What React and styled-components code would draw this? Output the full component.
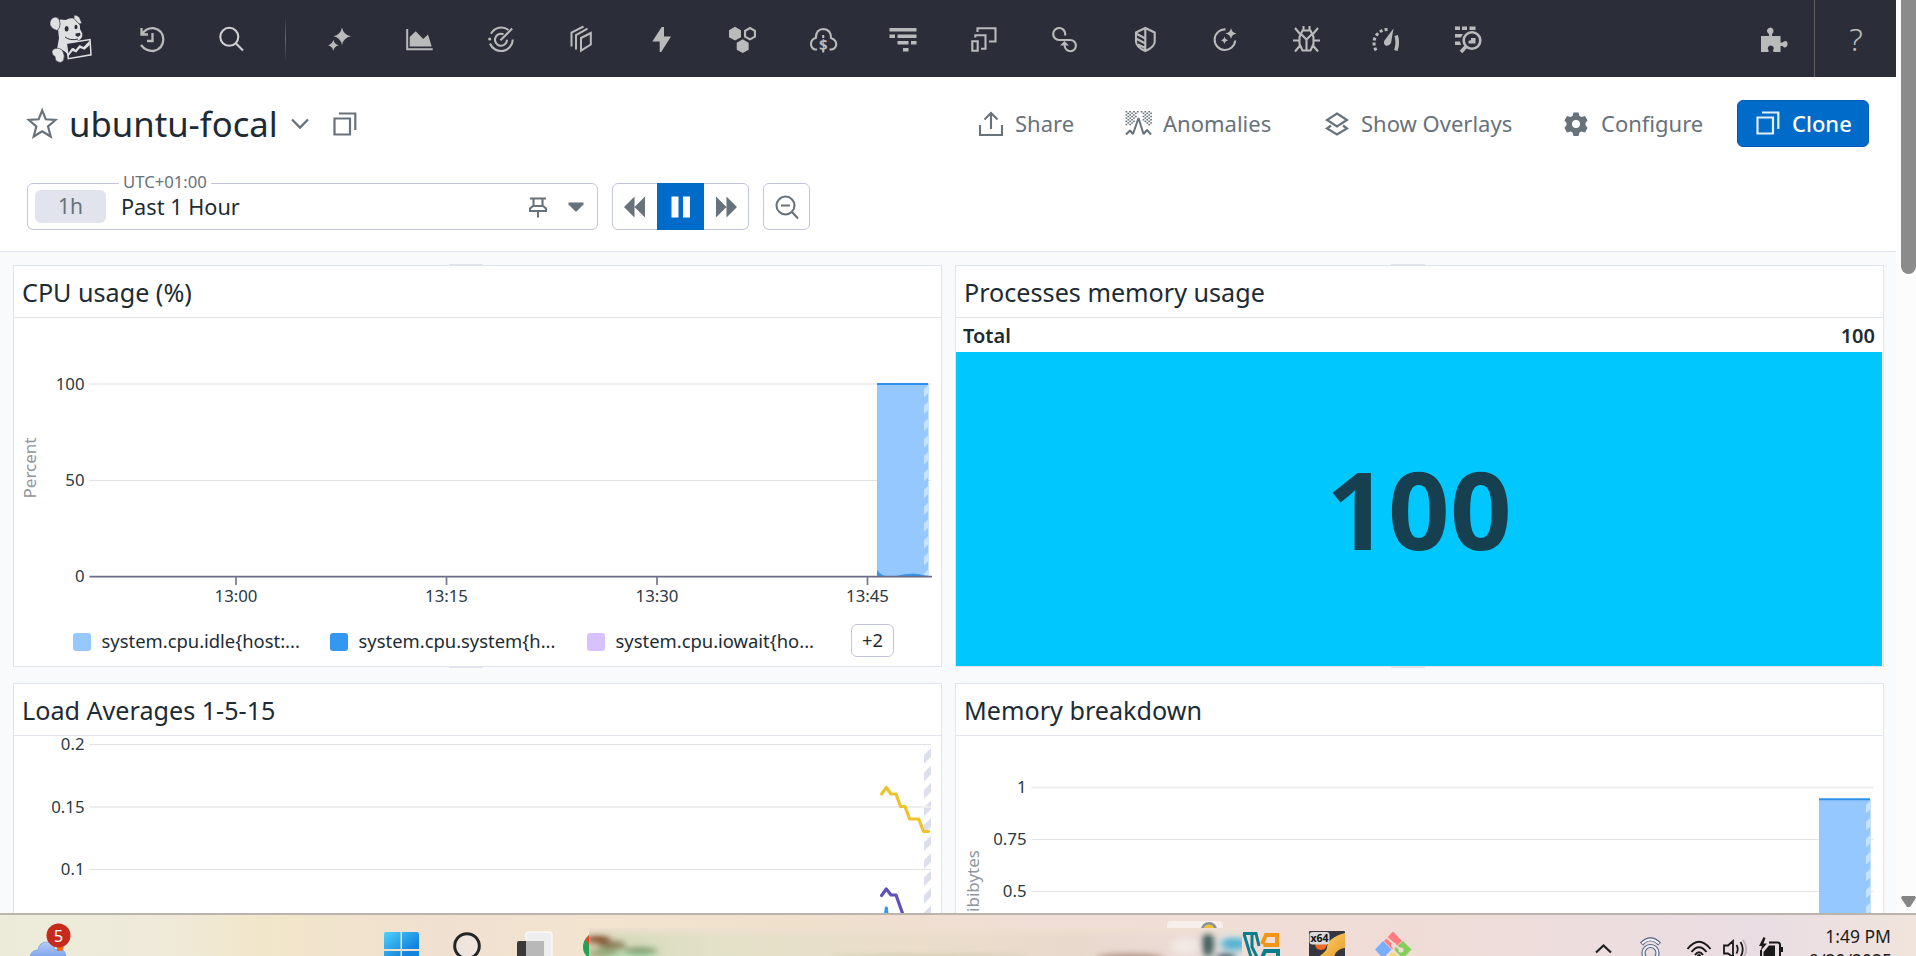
import React from "react";
import styled, { createGlobalStyle, css } from "styled-components";

const GlobalStyle = createGlobalStyle`
  * { box-sizing: border-box; }
  body { margin: 0; overflow: hidden; font-family: "Noto Sans", "Open Sans", sans-serif; color: #1c2b34; }
  svg { display: block; flex: none; overflow: visible; }
  svg text { font-family: "Noto Sans", "Open Sans", sans-serif; }
`;

const Screen = styled.div`
  width: 1916px;
  height: 956px;
  display: flex;
  flex-direction: column;
  overflow: hidden;
`;
const Browser = styled.div`
  height: 913px;
  flex: none;
  display: flex;
  overflow: hidden;
`;
const Page = styled.main`
  width: 1896px;
  height: 913px;
  background: #f9fafc;
  overflow: hidden;
`;
const ScrollTrack = styled.div`
  width: 20px;
  background: #fcfcfc;
  display: flex;
  flex-direction: column;
  justify-content: space-between;
  align-items: flex-end;
  padding-bottom: 5px;
`;
const ScrollThumb = styled.div`
  width: 15px;
  height: 274px;
  background: #8b8b8b;
  border-radius: 0 0 8px 8px;
`;

/* ---------- navigation ---------- */
const Nav = styled.nav`
  height: 77px;
  background: #2b2e39;
  display: flex;
  align-items: center;
  color: #b9bbba;
`;
const Logo = styled.div`
  width: 44px;
  margin-left: 49px;
`;
const NavItem = styled.div`
  width: ${(p) => p.$w || 80.5}px;
  margin-left: ${(p) => p.$ml || 0}px;
  padding-top: 1px;
  display: flex;
  justify-content: center;
  color: ${(p) => p.$color || "inherit"};
`;
const NavDivider = styled.div`
  width: 1px;
  height: 46px;
  margin: 0 13.5px 0 13px;
  background: linear-gradient(#2b2e39, #6a6a6c 50%, #2b2e39);
`;
const HelpSlot = styled.div`
  height: 77px;
  width: 82px;
  margin-left: 24px;
  border-left: 1px solid #625f64;
  display: flex;
  align-items: center;
  justify-content: center;
`;
const Spacer = styled.div`
  flex: ${(p) => (p.$w ? `0 0 ${p.$w}px` : "1")};
`;

/* ---------- header ---------- */
const Header = styled.header`
  height: 175px;
  background: #fff;
  border-bottom: 1px solid #e1e4ea;
  padding: 23px 27px 0 26px;
`;
const TitleRow = styled.div`
  display: flex;
  align-items: center;
  height: 47px;
  color: #67727a;
`;
const Title = styled.h1`
  margin: 0 11px 0 11px;
  width: 210px;
  font-weight: 400;
  font-size: 34.7px;
  line-height: 47px;
  color: #1c2b34;
  white-space: nowrap;
`;
const Action = styled.div`
  display: flex;
  align-items: center;
  gap: ${(p) => p.$gap || 11}px;
  width: ${(p) => p.$w}px;
  font-size: 22px;
  line-height: 47px;
  white-space: nowrap;
`;
const CloneButton = styled.button`
  width: 132px;
  height: 47px;
  border: 1px solid #0858b8;
  border-radius: 6px;
  background: #006bc8;
  color: #fff;
  font: 500 22px/43px "Noto Sans", sans-serif;
  display: flex;
  align-items: center;
  gap: 12px;
  padding: 0 0 1px 18px;
`;
const TimeRow = styled.div`
  display: flex;
  margin-top: 36px;
  padding-left: 1px;
  height: 47px;
  color: #67727a;
`;
const frame = css`
  border: 1px solid #c2c5dc;
  border-radius: 6px;
`;
const TimePicker = styled.div`
  ${frame}
  width: 571px;
  position: relative;
  display: flex;
  align-items: center;
  padding: 0 13px 0 7px;
`;
const RangeChip = styled.span`
  width: 71px;
  height: 33px;
  border-radius: 6px;
  background: #e1e3ed;
  font-size: 21px;
  line-height: 33px;
  text-align: center;
`;
const RangeText = styled.span`
  margin-left: 15px;
  flex: 1;
  font-size: 21.7px;
  line-height: 44px;
  color: #1c2b34;
`;
const ZoneLabel = styled.span`
  position: absolute;
  left: 91px;
  top: -13px;
  padding: 0 4px;
  background: #fff;
  font-size: 16.7px;
  line-height: 22px;
`;
const Transport = styled.div`
  ${frame}
  width: 137px;
  margin-left: 14px;
  display: flex;
`;
const TransportButton = styled.div`
  width: ${(p) => (p.$active ? 47 : 44)}px;
  height: 47px;
  margin: -1px 0;
  display: flex;
  align-items: center;
  justify-content: center;
  background: ${(p) => (p.$active ? "#006bc8" : "transparent")};
`;
const ZoomOut = styled.div`
  ${frame}
  width: 47px;
  margin-left: 14px;
  display: flex;
  align-items: center;
  justify-content: center;
`;

/* ---------- widgets ---------- */
const Grid = styled.section`
  display: grid;
  grid-template-columns: 929px 929px;
  grid-template-rows: 402px 402px;
  gap: 16px 13px;
  padding: 13px 0 0 13px;
`;
const Card = styled.article`
  position: relative;
  background: #fff;
  border: 1px solid #e1e3ed;
  &::before, &::after {
    content: "";
    position: absolute;
    left: 435px;
    width: 34px;
    height: 2px;
    background: #e1e3ed;
  }
  &::before { top: -2px; display: ${(p) => (p.$plain ? "none" : "block")}; }
  &::after { bottom: -2px; }
`;
const CardTitle = styled.h2`
  margin: 0;
  height: 52px;
  padding: 2px 0 0 8px;
  border-bottom: 1px solid #e1e3ed;
  font-weight: 400;
  font-size: 25.15px;
  line-height: 49px;
`;
const Legend = styled.div`
  display: flex;
  align-items: center;
  height: 33px;
  margin-top: 7px;
  padding-left: 59px;
`;
const LegendItem = styled.div`
  width: 257px;
  display: flex;
  align-items: center;
  gap: 10.5px;
  font-size: 18.4px;
  white-space: nowrap;
`;
const Swatch = styled.i`
  width: 18px;
  height: 18px;
  margin-top: 2px;
  border-radius: 3px;
  background: ${(p) => p.$color};
`;
const MoreButton = styled.span`
  ${frame}
  margin-left: 7px;
  width: 43px;
  height: 33px;
  font-size: 18.4px;
  line-height: 30px;
  text-align: center;
`;
const TotalRow = styled.div`
  height: 34px;
  padding: 0 8px 0 7px;
  display: flex;
  justify-content: space-between;
  font-weight: 600;
  font-size: 20px;
  line-height: 35px;
`;
const BigValue = styled.div`
  height: 314px;
  margin-right: 1px;
  background: #00c8ff;
  color: #16404f;
  font-weight: 700;
  font-size: 108px;
  line-height: 313px;
  text-align: center;
`;

/* ---------- taskbar ---------- */
const Taskbar = styled.footer`
  height: 43px;
  flex: none;
  border-top: 2px solid #b9b4ae;
  background: linear-gradient(90deg, #ecebd9 0, #efeada 160px, #f2e6ca 260px, #f0e0d0 440px, #f3e4d0 600px, #efe0cc 800px, #f1ded7 1060px, #efdcd6 1400px, #eadde3 1760px, #f0e4dc 1916px);
  display: flex;
  overflow: hidden;
`;
const Clock = styled.div`
  width: 82px;
  padding-top: 9px;
  text-align: right;
  font-size: 17.5px;
  line-height: 24px;
  white-space: nowrap;
  color: #1b1b1b;
`;

/* ---------- icons ---------- */
const Glyph = ({ children, size = 32, h, ...rest }) => (
  <svg width={size} height={h || size} viewBox={`0 0 ${size} ${h || size}`} fill="none" stroke="currentColor" strokeWidth="2.1" {...rest}>
    {children}
  </svg>
);
const solid = { fill: "currentColor", stroke: "none" };
const hex = (x, y, r) =>
  [0, 1, 2, 3, 4, 5].map((i) => {
    const a = (Math.PI / 3) * i - Math.PI / 2;
    return `${(x + r * Math.cos(a)).toFixed(2)},${(y + r * Math.sin(a)).toFixed(2)}`;
  }).join(" ");

const Dog = () => (
  <svg width="44" height="50" viewBox="0 0 44 50">
    <g fill="#dfe0e2">
      <path d="M11 5.5 17 6Q20 3.5 25 4.5L30 9.5Q31.5 12 31 15L33.3 19.5Q33.5 24 31 25.5L26 28 17 29.5 18.5 40Q13 34 8 35.5L10 24 9 15Z" />
      <path d="M1 8Q2.500 3 7 3Q11 4 11 9Q11 15 8 16.500Q3 15.500 1 11Z" stroke="#2b2e39" strokeWidth=".7" />
      <path d="M25 1Q28 .5 30.500 3.500L33 9.500 30 10 25 4.500Z" stroke="#2b2e39" strokeWidth=".7" />
      <path d="M4 35.500Q9 32.500 13.500 36.500 16.500 42 14.500 46.500 12 50 8 47.500 6 46 6 42.500 2.500 40.500 3 37.500Z" stroke="#2b2e39" strokeWidth=".6" />
    </g>
    <ellipse cx="17.600" cy="14.800" rx="2" ry="2.700" fill="#2b2e39" />
    <ellipse cx="27" cy="13" rx="1.500" ry="2.300" fill="#2b2e39" />
    <path d="M26.500 19.500 31 18.800 31.500 21 29 23 26.500 21.500Z" fill="#2b2e39" />
    <path d="M16 23Q21 27 29 25" stroke="#2b2e39" fill="none" />
    <path d="M17.300 29.300 41 25.500 42 40.800 19.300 44.700Z" fill="#2b2e39" stroke="#dfe0e2" strokeWidth="1.500" />
    <path d="M18.500 40.500 22.800 34.200 24.500 34 26.500 35.800 30.500 31 34.500 33 40.800 26.500V31L35.500 35.800 31 34 27.200 38.500 23.500 37 19.300 42.500Z" fill="#dfe0e2" />
  </svg>
);

const navIcons = [
  <g {...solid}><path d="M18 4.500Q19.500 12 27 13.300 19.500 14.700 18 22 16.500 14.700 9.500 13.300 16.500 12 18 4.500Z" /><path d="M9.300 16.800Q10.200 21.200 14.800 22.300 10.200 23.400 9.300 28 8.400 23.400 4 22.300 8.400 21.200 9.300 16.800Z" /></g>,
  <g transform="translate(-.8 0)"><path d="M4 6V26.300H29.500" strokeWidth="2" /><path {...solid} d="M6.500 23.500V14L12.500 8.200 20 16 24.800 11.500 28.500 23.500Z" /></g>,
  <><path d="M6 10.800A11.700 11.700 0 0 1 23.500 7M27.800 16.500A11.800 11.800 0 0 1 5 20.500M18.500 11.300A6 6 0 1 0 22 16.800M15.500 17.200 27.200 5.500" /><circle cx="4.700" cy="16" r="1.600" {...solid} /></>,
  <path d="M16 15 25.800 10V21.500L16 27.600ZM11 26.500V12L22.500 5.700M6.500 23.500V9.500L18.500 3.500" strokeWidth="2" />,
  <path {...solid} d="M15.700 4H18V13.600H25L15.200 29H13.700V18.500H6.300Z" />,
  <><polygon {...solid} points={hex(9, 10.700, 6.900)} /><polygon points={hex(24, 10.700, 5.700)} /><polygon {...solid} points={hex(16.700, 23.200, 6.900)} /></>,
  <><path d="M10 26.500H8Q4 25.500 4 20.500 4.500 16 8.800 15 9 6 16.500 6 24 6.500 24 15 29.300 17 29.300 21.500 28.500 26 24.500 26.500H22.500" /><text x="16.200" y="26.500" textAnchor="middle" fontSize="15" fontWeight="700" {...solid}>$</text><path d="M16.200 12V15M16.200 26V29.500" /></>,
  <path {...solid} d="M2.500 5H29.500V8.500H2.500ZM2.500 11.500H8V15H2.500ZM10.500 11.500H29.500V15H10.500ZM10.500 18H21.500V21.500H10.500ZM24 18H29.500V21.500H24ZM16 25H21.500V28.500H16Z" />,
  <path d="M9.500 9V5.300H27.500V18.500H21M7.300 14.500V12.300H17.500V25.700H13M4.300 18.300H9.700V27.800H4.300Z" />,
  <><path d="M17.200 12.500V10.700A6 6 0 1 0 11 17H22.300A5.600 5.600 0 1 1 16.700 23V21" /><path {...solid} d="M12 22.500 16.500 18 21 22.500Z" /></>,
  <path d="M16.300 5 25.700 9.500V18.500Q25.700 24 16.300 28 7 24 7 18.500V9.500ZM16.300 5V28M7 10.500 16.300 15.500M7 15.500 16.300 20.500M9 21.500 16.300 25" />,
  <><path d="M16.500 6.400A10.300 10.300 0 1 0 26.200 17.500" /><path {...solid} d="M22 5Q22.800 9.700 27.500 10.500 22.800 11.300 22 16 21.200 11.300 16.500 10.500 21.200 9.700 22 5ZM15.500 13.500Q16.200 16.800 19.300 17.200 16.200 17.800 15.500 21 14.800 17.800 12 17.200 14.800 16.800 15.500 13.500Z" /></>,
  <path d="M12.500 7.500H20.500L23.500 14V21L20.500 27.500H12.500L9.500 21V14ZM10.500 10.500 16.500 16.500 22.500 10.500M16.500 16.500V27.500M13.500 7V3M19.500 7V3M10 11 5 5M23 11 28 5M9.500 17.500H3M23.500 17.500H30M10.500 22 5 28.500M22.500 22 28 28.500" />,
  <><path d="M6 27.500Q1.500 18 7 11.500 12 6 18.500 6.500" strokeWidth="3" strokeDasharray="3 2.200" /><path {...solid} d="M23.500 5.500 21 20Q19 23.500 15.500 22.500 13 20.500 14.500 17.500Z" /><path d="M26.200 12.500Q28.500 20 25.800 27.500" strokeWidth="3.600" /></>,
  <><path {...solid} d="M4 3.500H9V7H4ZM11 3.500H16V7H11ZM18.500 3.500H24.500V7H18.500ZM4 11H12L10 14.500H4ZM4 18.500H9L10 22H4Z" /><circle cx="21" cy="17.500" r="8.300" strokeWidth="2.600" /><path d="M15 23.500 10 29" strokeWidth="3.500" /><path {...solid} d="M17.500 20.500V18L20 17V15H24.500V20.500Z" /></>,
];

const Star = () => (
  <Glyph size={32} stroke="#67727a"><path d="M16.200 2.500 19.800 11.300 29.500 12 22 18.500 24.700 28.500 16.200 23.200 7.700 28.500 10.300 18.500 2.800 12 12.600 11.300Z" strokeWidth="2.200" /></Glyph>
);
const CopyIcon = ({ color = "#67727a" }) => (
  <Glyph size={24} stroke={color}><path d="M1.500 6.500H17V22.500H1.500ZM6 1.500H22.300V18" strokeWidth="2.200" /></Glyph>
);
const Dots = () => {
  const dots = [];
  for (let r = 0; r < 9; r++) for (let c = 0; c < 14; c++) {
    const x = 0.5 + c * 1.900, y = 1 + r * 1.600;
    const d = Math.abs(x - 13.500);
    if ((r + c) % 2 === 0 && (r < 1 || (d > 2 + r * 0.350 && (r < 7 || d > 6)))) dots.push(<rect key={`${r}-${c}`} x={x} y={y} width="1.700" height="1.500" />);
  }
  return <g fill="currentColor" stroke="none">{dots}</g>;
};

const ink = "#2b3a43";
const Stripes = ({ id, color, period, x, y, w }) => (
  <pattern id={id} width={w} height={period} x={x} y={y} patternUnits="userSpaceOnUse">
    <path d={`M0 ${w}L${w} 0V${period * 0.500}L0 ${period * 0.500 + w}Z`} fill={color} />
  </pattern>
);
const GridLine = ({ x, y, x2, label, color = "#e0e2e5", w = 1 }) => (
  <>
    <path d={`M${x} ${y}H${x2}`} stroke={color} strokeWidth={w} />
    <text x={x - 5} y={y + 5.700} textAnchor="end" fontSize="16.800" fill={ink}>{label}</text>
  </>
);
const CpuChart = () => (
  <svg width="927" height="299" viewBox="14 318 927 299">
    <defs><Stripes id="cpuStripe" color="#c9e2fd" period={16.800} x={924} y={384} w={5} /></defs>
    <GridLine x={89.500} x2={931} y={384} w={2} color="#eeeeef" label="100" />
    <GridLine x={89.500} x2={931} y={480.500} label="50" />
    <rect x="877" y="384" width="51.500" height="192" fill="#94c8ff" />
    <rect x="924" y="385" width="5" height="190" fill="url(#cpuStripe)" />
    <path d="M877 384H928" stroke="#2f8fec" strokeWidth="2" />
    <path d="M877 570Q881 575 885 576H877ZM896 576Q914 571 926 576Z" fill="#3598f0" />
    <path d="M89.500 576.700H932" stroke="#6c6c86" strokeWidth="1.800" />
    <text x="84.500" y="582" textAnchor="end" fontSize="16.800" fill={ink}>0</text>
    {[[236, "13:00"], [446.500, "13:15"], [657, "13:30"], [867.500, "13:45"]].map(([x, t]) => (
      <g key={t}>
        <path d={`M${x} 577V585`} stroke="#7d7d96" strokeWidth="1.800" />
        <text x={x} y="602" textAnchor="middle" fontSize="16.800" fill={ink}>{t}</text>
      </g>
    ))}
    <text transform="translate(36 468) rotate(-90)" textAnchor="middle" fontSize="17" fill="#8f979c">Percent</text>
  </svg>
);
const LoadChart = () => (
  <svg width="927" height="180" viewBox="14 736 927 180">
    <defs><Stripes id="loadStripe" color="#dcdeeb" period={17.500} x={924} y={748} w={7} /></defs>
    <rect x="924" y="744.500" width="7" height="170" fill="url(#loadStripe)" />
    <GridLine x={89.500} x2={931} y={744.500} label="0.2" />
    <GridLine x={89.500} x2={931} y={807} w={2} color="#eeeeef" label="0.15" />
    <GridLine x={89.500} x2={931} y={869.500} label="0.1" />
    <g fill="none" strokeWidth="3.200" strokeLinecap="round" strokeLinejoin="round">
      <path d="M881.600 794 886.300 787.500 891 794H896L900.500 806.500H905L909.700 819H918.800L923.500 831.500H928.500" stroke="#efc32c" />
      <path d="M881.600 895.500 886.300 889 891 895H896L903.500 916" stroke="#5f4fbf" />
      <path d="M885.300 918 886.300 908 887.300 918" stroke="#3598f0" />
    </g>
  </svg>
);
const MemoryChart = () => (
  <svg width="927" height="180" viewBox="956 736 927 180">
    <defs><Stripes id="memStripe" color="#c9e2fd" period={17} x={1866} y={800} w={5} /></defs>
    <GridLine x={1031.500} x2={1873.500} y={787.500} w={2} color="#eeeeef" label="1" />
    <GridLine x={1031.500} x2={1873.500} y={839.500} label="0.75" />
    <GridLine x={1031.500} x2={1873.500} y={891.500} label="0.5" />
    <rect x="1819" y="799" width="51.500" height="120" fill="#94c8ff" />
    <rect x="1866" y="800" width="5" height="120" fill="url(#memStripe)" />
    <path d="M1819 799.300H1870" stroke="#2f8fec" strokeWidth="2" />
    <text transform="translate(978.500 850) rotate(-90)" textAnchor="end" fontSize="17" fill="#8f979c">Gibibytes</text>
  </svg>
);

const TaskbarArt = () => (
  <svg width="1809" height="41" viewBox="0 915 1809 41">
    <defs>
      <linearGradient id="win" x1="0" y1="0" x2="1" y2="1"><stop offset="0" stopColor="#4fd0fa" /><stop offset=".7" stopColor="#1384dd" /></linearGradient>
      <linearGradient id="cloud" x1="0" y1="0" x2="0" y2="1"><stop offset="0" stopColor="#b9cdf8" /><stop offset="1" stopColor="#7ea4ee" /></linearGradient>
      <linearGradient id="flame" x1="0" y1="0" x2="1" y2="1"><stop offset="0" stopColor="#fbd66c" /><stop offset="1" stopColor="#e99b30" /></linearGradient>
      <linearGradient id="strip" x1="0" y1="0" x2="1" y2="0">
        <stop offset="0" stopColor="#d9cfb4" /><stop offset=".05" stopColor="#d6dcbc" /><stop offset=".2" stopColor="#e4e1c9" /><stop offset=".5" stopColor="#ebddca" /><stop offset=".75" stopColor="#e9d9cd" /><stop offset=".92" stopColor="#ecdbd6" /><stop offset="1" stopColor="#dbe0e2" />
      </linearGradient>
      <filter id="soft" x="-30%" y="-60%" width="160%" height="220%"><feGaussianBlur stdDeviation="3" /></filter>
      <clipPath id="stripClip"><rect x="589" y="928" width="653" height="30" /></clipPath>
      <linearGradient id="fade" x1="0" y1="0" x2="0" y2="1"><stop offset="0" stopColor="#efdfd0" stopOpacity=".95" /><stop offset="1" stopColor="#efdfd0" stopOpacity="0" /></linearGradient>
    </defs>
    <path d="M30 957Q31 950 38 950 39 942 47 942 53 942 55 950 65 946 66 957Z" fill="url(#cloud)" stroke="#6c92dc" strokeWidth=".6" />
    <path d="M57 947H64L62 951H57Z" fill="#f36c13" />
    <circle cx="58.500" cy="935.500" r="12" fill="#c62a1d" />
    <text x="58.500" y="941.500" textAnchor="middle" fontSize="16.500" fill="#fff">5</text>
    <path d="M386 932H400.500V949H384V934Q384 932 386 932ZM402 932H417Q419 932 419 934V949H402ZM384 951H400.500V960H384ZM402 951H419V960H402Z" fill="url(#win)" />
    <circle cx="467" cy="946" r="12.300" fill="#eee5df" stroke="#252525" strokeWidth="3" />
    <rect x="526" y="932" width="26" height="30" rx="2" fill="#eeeeef" stroke="#fff" />
    <rect x="517" y="941" width="27" height="20" rx="2" fill="#393939" />
    <rect x="526" y="941" width="18" height="20" fill="#b8b8b8" />
    <path d="M589 935Q583 940 583 947T589 958Z" fill="#26a053" /><path d="M589 935 585.500 939.500 589 945Z" fill="#ea4335" />
    <rect x="1167" y="921" width="56" height="40" rx="4" fill="#f7efec" />
    <circle cx="1209" cy="930" r="6.800" fill="#efc33a" stroke="#8b8f98" strokeWidth="2.500" />
    <g clipPath="url(#stripClip)">
      <rect x="589" y="928" width="653" height="30" fill="url(#strip)" />
      <g filter="url(#soft)">
        <ellipse cx="598" cy="939" rx="12" ry="4" fill="#86502f" />
        <ellipse cx="612" cy="945" rx="14" ry="3.500" fill="#7a6b46" />
        <ellipse cx="604" cy="953" rx="16" ry="3" fill="#7f9a63" />
        <ellipse cx="640" cy="951" rx="18" ry="3" fill="#6d8a58" />
        <ellipse cx="632" cy="958" rx="26" ry="4" fill="#b7e3b8" />
        <ellipse cx="930" cy="958" rx="100" ry="3" fill="#cfcbb0" />
        <ellipse cx="1130" cy="958" rx="34" ry="4" fill="#a98d80" />
        <ellipse cx="1185" cy="946" rx="14" ry="8" fill="#f2e9e4" />
        <ellipse cx="1208" cy="944" rx="6" ry="13" fill="#3f5f5c" />
        <ellipse cx="1226" cy="958" rx="10" ry="4" fill="#314d5b" />
        <ellipse cx="1234" cy="944" rx="13" ry="6" fill="#4fb0d2" />
      </g>
      <rect x="589" y="928" width="653" height="10" fill="url(#fade)" />
    </g>
    <path d="M1243 933.500H1256L1259 946M1244 934 1251 957M1252 934V947L1257 957" fill="none" stroke="#0b7d8d" strokeWidth="3" />
    <path d="M1262 944 1266 935H1277V945H1263.500" fill="none" stroke="#f39414" strokeWidth="4" />
    <path d="M1262 958 1265 951H1278V958" fill="none" stroke="#0b7d8d" strokeWidth="4" />
    <rect x="1309" y="931" width="36" height="30" rx="1" fill="#35363f" />
    <path d="M1345 933Q1327 938 1327 948 1326 952 1318 957H1334Q1336 949 1345 948Z" fill="url(#flame)" />
    <circle cx="1321" cy="944" r="6" fill="#f26a23" />
    <rect x="1309.500" y="932" width="20" height="12.500" rx="3" fill="#dadada" />
    <text x="1319.500" y="942" textAnchor="middle" fontSize="10.500" fontWeight="700" fill="#111">x64</text>
    <path d="M1393 931.500 1402 941 1393 950 1384 941Z" fill="#ff7b80" />
    <path d="M1383 941 1391.500 949.500 1383 958.500 1375 949.500Z" fill="#7caeff" />
    <path d="M1403 941 1411.500 949.500 1403 958.500 1394 949.500Z" fill="#85d05c" />
    <path d="M1393 951 1401 959 1393 968 1385 959Z" fill="#f8d978" />
    <path d="M1386 937 1394 944 1393 953M1394 944 1401 950" stroke="#efdcd6" strokeWidth="2" fill="none" /><circle cx="1393.500" cy="945" r="2.500" fill="#efdcd6" /><circle cx="1401" cy="950" r="2.500" fill="#efdcd6" />
    <path d="M1596 952.500 1603.500 945.500 1611 952.500" fill="none" stroke="#202020" strokeWidth="2.200" />
    <g fill="none" stroke="#4f6285" strokeWidth="4.200"><path d="M1641.500 944Q1650.500 934.500 1659.500 944" /><circle cx="1650.500" cy="953" r="7" /></g>
    <g fill="none" stroke="#f6f2f4" strokeWidth="2"><path d="M1642 943.500Q1650.500 935.500 1659 943.500" /><circle cx="1650.500" cy="953" r="7" /></g>
    <g fill="none" stroke="#191919" strokeWidth="2"><path d="M1687.500 949Q1699 934.500 1710.500 949M1691.500 952Q1699 942.500 1706.500 952M1695 955Q1699 949.500 1703 955" /></g>
    <circle cx="1699" cy="956" r="2" fill="#191919" />
    <path d="M1724 945.500H1728L1733 941V957L1728 953.500H1724ZM1736.500 945Q1739 949 1736.500 953.500M1740.500 942Q1745 949 1740.500 957" fill="none" stroke="#191919" strokeWidth="1.800" />
    <path d="M1743 940Q1749.500 949 1743 958" fill="none" stroke="#bdb1b6" strokeWidth="1.800" />
    <path d="M1769 942.500H1778Q1780 942.500 1780 945V957H1761V950" fill="none" stroke="#191919" strokeWidth="2" />
    <path d="M1769 945.500H1775V957H1763.500V952Z" fill="#191919" /><rect x="1780" y="947" width="3" height="5" fill="#191919" />
    <path d="M1763.500 937 1759 946H1762L1760.500 951 1767 943.500H1763.500L1765.500 938Z" fill="#191919" />
  </svg>
);

export default function App() {
  return (
    <Screen>
      <GlobalStyle />
      <Browser>
        <Page>
          <Nav>
            <Logo><Dog /></Logo>
            <NavItem $w={80} $ml={19}>
              <Glyph><path d="M5.500 5V11.500H12M6 11Q11 4.500 17.500 5.200 27 7 27.300 16.500 27 26 17.500 28 9.500 28 5 22M16.500 10V18H11" strokeWidth="2.300" /></Glyph>
            </NavItem>
            <NavItem $w={80} $color="#cfd0d2">
              <Glyph><circle cx="13.300" cy="13.800" r="9" /><path d="M20 20.500 27 27.500" /></Glyph>
            </NavItem>
            <NavDivider />
            {navIcons.map((icon, i) => (<NavItem key={i}><Glyph>{icon}</Glyph></NavItem>))}
            <Spacer />
            <NavItem $w={32}>
              <Glyph><path {...solid} d="M3 13H11V11Q8.500 9.500 9 7 10 4.500 12.500 4.500 15.500 5 15.500 8 15.500 10 14 11V13H22.500V19.500H24.500Q26 17.500 28 18 30 19 29.500 22 28.500 25 26 24.500L24.500 23H22.500V29H15.500L15 27Q16.500 25 15 23.500 12.500 21.500 10.500 23.500 9 25.500 10.500 27V29H3Z" /></Glyph>
            </NavItem>
            <HelpSlot><Glyph><text x="16" y="27.500" textAnchor="middle" fontSize="32" fontWeight="300" {...solid}>?</text></Glyph></HelpSlot>
          </Nav>

          <Header>
            <TitleRow>
              <Star />
              <Title>ubuntu-focal</Title>
              <Glyph size={20}><path d="M2 5.500 10 13.500 18 5.500" strokeWidth="2.300" /></Glyph>
              <Spacer $w={23} />
              <CopyIcon />
              <Spacer />
              <Action $w={147}>
                <Glyph size={26}><path d="M2 14V24H24V14M13 18V2.500M6.500 8.500 13 2 19.500 8.500" /></Glyph>Share
              </Action>
              <Action $w={199}>
                <Glyph size={27}><Dots /><path d="M1 24.500 5 20.500 8 24 13.500 8 18.500 24 22 20 26 24.500" strokeWidth="2" strokeLinejoin="bevel" /></Glyph>Anomalies
              </Action>
              <Action $w={239}>
                <Glyph size={26}><path d="M13 2.500 23 9 13 15.500 3 9ZM7 14.500 3 17.500 13 23.500 23 17.500 19 14.500" strokeWidth="2.200" /></Glyph>Show Overlays
              </Action>
              <Action $w={174} $gap={12}>
                <Glyph size={26}><path {...solid} fillRule="evenodd" d="M10.500 1.500H15.500L16.500 5 18.500 6 22 5 24.500 9.500 22.500 12V14L24.500 17 22 21.500 18.500 20.500 16.500 21.500 15.500 25H10.500L9.500 21.500 7.500 20.500 4 21.500 1.500 17 3.500 14V12L1.500 9.500 4 5 7.500 6 9.500 5ZM13 9A4 4 0 1 0 13 17A4 4 0 1 0 13 9Z" /></Glyph>Configure
              </Action>
              <CloneButton><CopyIcon color="#e3effb" />Clone</CloneButton>
            </TitleRow>
            <TimeRow>
              <TimePicker>
                <RangeChip>1h</RangeChip>
                <ZoneLabel>UTC+01:00</ZoneLabel>
                <RangeText>Past 1 Hour</RangeText>
                <Glyph size={20} h={22}><path d="M2 2.500H18M5.500 2.500V10.500M14.500 2.500V10.500M2 15V12.500L5 10H15L18 12.500V15ZM10 15V21.500" /></Glyph>
                <Spacer $w={20} />
                <Glyph size={16}><path {...solid} d="M.5 3.500H15.500V5.500L8.500 12.500H7.500L.5 5.500Z" /></Glyph>
              </TimePicker>
              <Transport>
                <TransportButton><Glyph size={22}><path {...solid} d="M10.500 .5V21.500L0 11ZM21 .5V21.500L10.500 11Z" /></Glyph></TransportButton>
                <TransportButton $active><Glyph size={22}><path fill="#fff" stroke="none" d="M1.500 .5H8.500V21.500H1.500ZM13 .5H20V21.500H13Z" /></Glyph></TransportButton>
                <TransportButton><Glyph size={22}><path {...solid} d="M1 .5V21.500L11.500 11ZM11.500 .5V21.500L22 11Z" /></Glyph></TransportButton>
              </Transport>
              <ZoomOut><Glyph size={24}><circle cx="10.500" cy="10.500" r="9" /><path d="M6 10.500H15M17 17 23 23.500" /></Glyph></ZoomOut>
            </TimeRow>
          </Header>

          <Grid>
            <Card>
              <CardTitle>CPU usage (%)</CardTitle>
              <CpuChart />
              <Legend>
                <LegendItem><Swatch $color="#94c8ff" />system.cpu.idle{"{"}host:...</LegendItem>
                <LegendItem><Swatch $color="#3598f0" />system.cpu.system{"{"}h...</LegendItem>
                <LegendItem><Swatch $color="#d7c2ff" />system.cpu.iowait{"{"}ho...</LegendItem>
                <MoreButton>+2</MoreButton>
              </Legend>
            </Card>
            <Card>
              <CardTitle>Processes memory usage</CardTitle>
              <TotalRow><span>Total</span><span>100</span></TotalRow>
              <BigValue>100</BigValue>
            </Card>
            <Card $plain>
              <CardTitle>Load Averages 1-5-15</CardTitle>
              <LoadChart />
            </Card>
            <Card $plain>
              <CardTitle>Memory breakdown</CardTitle>
              <MemoryChart />
            </Card>
          </Grid>
        </Page>
        <ScrollTrack>
          <ScrollThumb />
          <svg width="15" height="13"><path d="M1 1H14L15 3 9 12H6L0 3Z" fill="#858585" /></svg>
        </ScrollTrack>
      </Browser>
      <Taskbar>
        <TaskbarArt />
        <Clock>1:49 PM<br />9/20/2025</Clock>
      </Taskbar>
    </Screen>
  );
}
